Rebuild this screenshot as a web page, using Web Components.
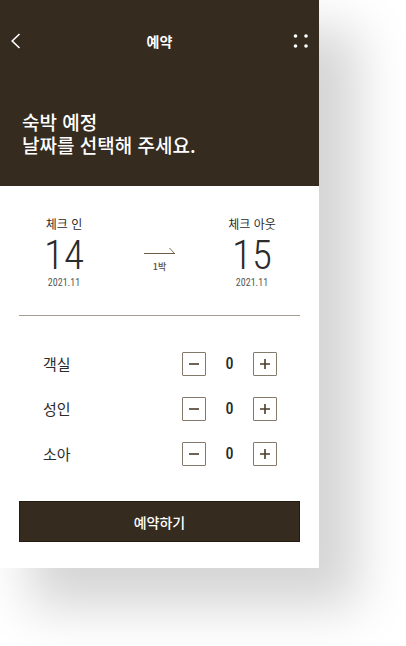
<!DOCTYPE html>
<html lang="ko">
<head>
<meta charset="utf-8">
<meta name="viewport" content="width=device-width, initial-scale=1">
<title>예약</title>
<style>
  html { background: #fff; }
  body {
    margin: 0;
    padding: 0 87px 78px 0;
    font-family: "Noto Sans CJK KR", "Noto Sans", sans-serif;
    color: #2b2b2b;
    --brown: #362b1f;
    --line: #a39d95;
    --digits: "Roboto Condensed", "Liberation Sans Narrow", Roboto, sans-serif;
  }
</style>
</head>
<body>
<booking-screen>
  <booking-header slot="header" heading="예약">숙박 예정<br>날짜를 선택해 주세요.</booking-header>
  <stay-dates>
    <stay-date slot="in" label="체크 인" day="14" month="2021.11"></stay-date>
    <stay-date slot="out" label="체크 아웃" day="15" month="2021.11"></stay-date>
    <span slot="nights">1박</span>
  </stay-dates>
  <guest-list>
    <count-stepper>객실</count-stepper>
    <count-stepper>성인</count-stepper>
    <count-stepper>소아</count-stepper>
  </guest-list>
  <submit-button slot="footer">예약하기</submit-button>
</booking-screen>

<script>
function define(name, html, setup) {
  const template = document.createElement('template');
  template.innerHTML = html;
  customElements.define(name, class extends HTMLElement {
    constructor() {
      super();
      this.attachShadow({ mode: 'open' }).append(template.content.cloneNode(true));
    }
    connectedCallback() {
      if (setup && !this.ready) { this.ready = true; setup(this, this.shadowRoot); }
    }
  });
}

define('booking-screen', `
  <style>
    :host { display: block; background: #fff; box-shadow: 34px 34px 48px 5px rgba(0,0,0,.17); }
    main { padding: 0 19px; }
    footer { padding: 0 19px 26px; }
  </style>
  <slot name="header"></slot>
  <main><slot></slot></main>
  <footer><slot name="footer"></slot></footer>`);

define('booking-header', `
  <style>
    :host { display: block; background: var(--brown); color: #fff; }
    nav { display: grid; grid-template-columns: 1fr auto 1fr; align-items: center; height: 82px; padding: 0 11px; }
    h1 { margin: 0; font-size: 14px; line-height: 20px; font-weight: 700; }
    p { margin: 0; padding: 28px 22px 30px; font-size: 19px; line-height: 23px; font-weight: 500; }
    button { all: unset; display: block; cursor: pointer; }
    button:last-child { justify-self: end; }
    svg { display: block; }
  </style>
  <nav>
    <button type="button" aria-label="뒤로">
      <svg width="10" height="16" viewBox="0 0 10 16" fill="none" stroke="#fff" stroke-width="1.6"><path d="M8.500 1 1.200 8l7.300 7"/></svg>
    </button>
    <h1></h1>
    <button type="button" aria-label="메뉴">
      <svg width="16" height="16" viewBox="0 0 16 16" fill="#fff"><circle cx="3.500" cy="3" r="1.800"/><circle cx="14" cy="3" r="1.800"/><circle cx="3.500" cy="13" r="1.800"/><circle cx="14" cy="13" r="1.800"/></svg>
    </button>
  </nav>
  <p><slot></slot></p>`,
  (el, root) => { root.querySelector('h1').textContent = el.getAttribute('heading'); });

define('stay-dates', `
  <style>
    :host { display: grid; grid-template-columns: 90px 1fr 90px; border-bottom: 1px solid var(--line); padding: 29px 3px 26px 0; }
    .nights { text-align: center; padding: 32px 0 0 3px; font-size: 9px; line-height: 14px; font-weight: 500; color: #5a4c3c; }
    svg { display: block; margin: 0 auto 5px; }
  </style>
  <slot name="in"></slot>
  <div class="nights">
    <svg width="32" height="8" viewBox="0 0 32 8" fill="none" stroke="#6f5d48"><path d="M0 6.500h31"/><path d="m25.500 1 5 5.500" stroke-width=".9"/></svg>
    <slot name="nights"></slot>
  </div>
  <slot name="out"></slot>`);

define('stay-date', `
  <style>
    :host { display: flex; flex-direction: column; align-items: center; white-space: nowrap; }
    .label { font-size: 12px; line-height: 18px; }
    .day { font: 300 41px/44px var(--digits); }
    .month { font: 10px/12px var(--digits); color: #555; }
  </style>
  <span class="label"></span><span class="day"></span><span class="month"></span>`,
  (el, root) => {
    for (const key of ['label', 'day', 'month']) root.querySelector('.' + key).textContent = el.getAttribute(key);
  });

define('guest-list', `
  <style>
    :host { display: flex; flex-direction: column; gap: 21px; padding: 36px 23px 35px 24px; }
  </style>
  <slot></slot>`);

define('count-stepper', `
  <style>
    :host { display: flex; align-items: center; justify-content: space-between; font-size: 15px; line-height: 24px; }
    .controls { display: flex; align-items: center; }
    output { width: 47px; text-align: center; font: 500 16px/24px var(--digits); }
    button { box-sizing: border-box; width: 24px; height: 24px; padding: 0; display: grid; place-items: center; background: #fff; border: 1px solid #85796b; border-radius: 1px; cursor: pointer; }
    svg { display: block; }
  </style>
  <span id="name"><slot></slot></span>
  <div class="controls" role="group" aria-labelledby="name">
    <button type="button" aria-label="빼기"><svg width="10" height="10" viewBox="0 0 10 10" stroke="#4b3d2c" stroke-width="1.600"><path d="M0 5h10"/></svg></button>
    <output>0</output>
    <button type="button" aria-label="더하기"><svg width="10" height="10" viewBox="0 0 10 10" stroke="#4b3d2c" stroke-width="1.600"><path d="M0 5h10M5 0v10"/></svg></button>
  </div>`,
  (el, root) => {
    const out = root.querySelector('output');
    const [minus, plus] = root.querySelectorAll('button');
    minus.onclick = () => { out.textContent = Math.max(0, +out.textContent - 1); };
    plus.onclick = () => { out.textContent = +out.textContent + 1; };
  });

define('submit-button', `
  <style>
    :host { display: block; }
    button { display: block; width: 100%; height: 41px; border: 1px solid #261a0f; padding: 0; background: var(--brown); color: #fff; font: 500 14px/20px "Noto Sans CJK KR", sans-serif; cursor: pointer; }
  </style>
  <button type="button"><slot></slot></button>`);
</script>
</body>
</html>
